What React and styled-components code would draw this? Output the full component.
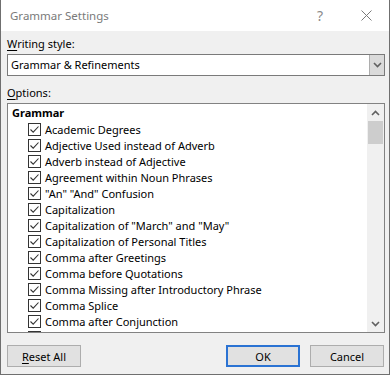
import React from 'react';
import styled, { createGlobalStyle } from 'styled-components';

const GlobalStyle = createGlobalStyle`
  html, body {
    margin: 0;
    padding: 0;
    background: #ffffff;
  }
  body {
    font-family: "Noto Sans", "Liberation Sans", sans-serif;
    font-size: 11px;
    color: #000;
  }
`;

const Window = styled.div`
  width: 390px;
  height: 375px;
  box-sizing: border-box;
  border: 1px solid #6f6f6f;
  border-top: none;
  background: #f0f0f0;
  display: flex;
  flex-direction: column;
`;

const TitleBar = styled.div`
  height: 31px;
  flex: none;
  background: #ffffff;
  display: flex;
  align-items: center;
  padding-left: 9px;
  color: #7a7a7a;
  font-size: 11.5px;
`;

const Title = styled.div`
  flex: 1;
`;

const TitleButton = styled.div`
  width: ${p => p.w}px;
  height: 31px;
  display: flex;
  align-items: center;
  justify-content: center;
  color: #8a8a8a;
  font-size: 14px;
`;

const Body = styled.div`
  flex: 1;
  display: flex;
  flex-direction: column;
  padding: 5px 4px 0 6px;
`;

const Label = styled.div`
  height: 15px;
  line-height: 15px;
  margin-bottom: 3px;
  & u {
    text-decoration: underline;
    text-underline-offset: 2px;
  }
`;

const Combo = styled.div`
  height: 22px;
  box-sizing: border-box;
  border: 1px solid #7a7a7a;
  background: #fff;
  display: flex;
  align-items: stretch;
  margin-bottom: 9px;
`;

const ComboText = styled.div`
  flex: 1;
  padding-left: 3px;
  line-height: 20px;
`;

const ComboButton = styled.div`
  width: 15px;
  box-sizing: border-box;
  border-left: 1px solid #adadad;
  background: #dadada;
  display: flex;
  align-items: center;
  justify-content: center;
`;

const ListBox = styled.div`
  height: 230px;
  flex: none;
  box-sizing: border-box;
  border: 1px solid #828282;
  background: #fff;
  display: flex;
  overflow: hidden;
`;

const ListContent = styled.div`
  flex: 1;
  padding: 1px 0 0 4px;
`;

const GroupHeading = styled.div`
  font-weight: bold;
  height: 16px;
  line-height: 16px;
`;

const Row = styled.div`
  display: flex;
  align-items: center;
  height: 16px;
  padding-left: 16px;
  white-space: nowrap;
`;

const Box = styled.div`
  width: 13px;
  height: 13px;
  box-sizing: border-box;
  border: 1px solid #333;
  background: #fff;
  margin-right: 4px;
  flex: none;
  display: flex;
  align-items: center;
  justify-content: center;
`;

const Scrollbar = styled.div`
  width: 17px;
  background: #f0f0f0;
  display: flex;
  flex-direction: column;
  align-items: center;
`;

const Arrow = styled.div`
  height: 17px;
  width: 100%;
  display: flex;
  align-items: center;
  justify-content: center;
`;

const Track = styled.div`
  flex: 1;
  width: 100%;
`;

const Thumb = styled.div`
  height: 23px;
  width: 15px;
  margin: 0 auto;
  background: #cdcdcd;
`;

const Footer = styled.div`
  display: flex;
  align-items: center;
  padding: 12px 1px 0 0;
`;

const Button = styled.button`
  width: 74px;
  height: 22px;
  box-sizing: border-box;
  font-family: inherit;
  font-size: 11px;
  color: #000;
  background: #e1e1e1;
  border: ${p => (p.primary ? '2px solid #2b73d3' : '1px solid #adadad')};
  margin-left: ${p => p.ml || 0}px;
  padding: 0;
  & u {
    text-underline-offset: 2px;
  }
`;

const Spacer = styled.div`
  flex: 1;
`;

const Check = () => (
  <svg width="11" height="11" viewBox="0 0 11 11">
    <path d="M1.5 5.5 L4.2 8.2 L9.5 2.5" fill="none" stroke="#333" strokeWidth="1.1" />
  </svg>
);

const Chevron = ({ up }) => (
  <svg width="9" height="6" viewBox="0 0 9 6">
    <path
      d={up ? 'M1 5 L4.5 1.5 L8 5' : 'M1 1 L4.5 4.5 L8 1'}
      fill="none"
      stroke="#606060"
      strokeWidth="1.6"
    />
  </svg>
);

const items = [
  'Academic Degrees',
  'Adjective Used instead of Adverb',
  'Adverb instead of Adjective',
  'Agreement within Noun Phrases',
  '"An" "And" Confusion',
  'Capitalization',
  'Capitalization of "March" and "May"',
  'Capitalization of Personal Titles',
  'Comma after Greetings',
  'Comma before Quotations',
  'Comma Missing after Introductory Phrase',
  'Comma Splice',
  'Comma after Conjunction',
];

export default function App() {
  return (
    <>
      <GlobalStyle />
      <Window>
        <TitleBar>
          <Title>Grammar Settings</Title>
          <TitleButton w={46}>?</TitleButton>
          <TitleButton w={46}>
            <svg width="11" height="11" viewBox="0 0 11 11">
              <path d="M0.5 0.5 L10.5 10.5 M10.5 0.5 L0.5 10.5" stroke="#7a7a7a" strokeWidth="1" />
            </svg>
          </TitleButton>
        </TitleBar>
        <Body>
          <Label>
            <u>W</u>riting style:
          </Label>
          <Combo>
            <ComboText>Grammar &amp; Refinements</ComboText>
            <ComboButton>
              <Chevron />
            </ComboButton>
          </Combo>
          <Label>
            <u>O</u>ptions:
          </Label>
          <ListBox>
            <ListContent>
              <GroupHeading>Grammar</GroupHeading>
              {items.map(item => (
                <Row key={item}>
                  <Box>
                    <Check />
                  </Box>
                  {item}
                </Row>
              ))}
              <Row>
                <Box />
              </Row>
            </ListContent>
            <Scrollbar>
              <Arrow>
                <Chevron up />
              </Arrow>
              <Track>
                <Thumb />
              </Track>
              <Arrow>
                <Chevron />
              </Arrow>
            </Scrollbar>
          </ListBox>
          <Footer>
            <Button>
              <u>R</u>eset All
            </Button>
            <Spacer />
            <Button primary>OK</Button>
            <Button ml={10}>Cancel</Button>
          </Footer>
        </Body>
      </Window>
    </>
  );
}
